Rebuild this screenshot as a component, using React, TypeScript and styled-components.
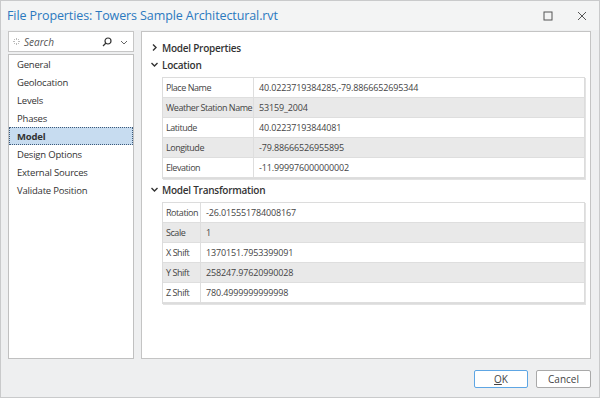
import React from "react";
import styled, { createGlobalStyle } from "styled-components";

const Global = createGlobalStyle`
  html, body { margin: 0; padding: 0; background: #eeeff0; }
  * { box-sizing: border-box; }
  body { font-family: "Open Sans", "Noto Sans", sans-serif; }
`;

const Window = styled.div`
  width: 600px;
  height: 398px;
  border: 1px solid #c9cacb;
  background: #eeeff0;
  display: flex;
  flex-direction: column;
  overflow: hidden;
`;

const TitleBar = styled.div`
  height: 29px;
  flex: none;
  display: flex;
  align-items: center;
  padding-left: 6px;
  background: #f3f4f4;
`;

const Title = styled.div`
  flex: 1;
  color: #2b79bf;
  font-size: 12.5px;
  letter-spacing: -0.1px;
`;

const WinButton = styled.div`
  width: 34px;
  height: 29px;
  display: flex;
  align-items: center;
  justify-content: center;
`;

const Body = styled.div`
  flex: 1;
  display: flex;
  gap: 7px;
  padding: 1px 8px 0 7px;
  min-height: 0;
`;

const Sidebar = styled.div`
  width: 126px;
  display: flex;
  flex-direction: column;
  gap: 2px;
  height: 328px;
`;

const SearchBox = styled.div`
  height: 21px;
  background: #fff;
  border: 1px solid #c6c6c6;
  display: flex;
  align-items: center;
  padding: 0 4px 0 4px;
  gap: 4px;
`;

const SearchText = styled.span`
  flex: 1;
  font-style: italic;
  color: #555;
  font-size: 10px;
`;

const List = styled.div`
  flex: 1;
  background: #fff;
  border: 1px solid #c0c0c0;
  display: flex;
  flex-direction: column;
`;

const Item = styled.div<{ $selected?: boolean }>`
  height: 18px;
  display: flex;
  align-items: center;
  padding-left: 7px;
  font-size: 9.5px;
  letter-spacing: -0.2px;
  color: #333;
  font-weight: ${(p) => (p.$selected ? 700 : 400)};
  background: ${(p) => (p.$selected ? "#c7dcf0" : "transparent")};
  border: 1px dotted ${(p) => (p.$selected ? "#3d5a7a" : "transparent")};
`;

const Panel = styled.div`
  flex: 1;
  background: #fff;
  border: 1px solid #c4c4c4;
  height: 328px;
  padding: 7px 5px 0 8px;
  display: flex;
  flex-direction: column;
`;

const SectionHeader = styled.div`
  height: 17px;
  flex: none;
  display: flex;
  align-items: center;
  gap: 3px;
  font-weight: 600;
  font-size: 10px;
  letter-spacing: -0.25px;
  color: #333;
`;

const Chevron = styled.svg`
  width: 9px;
  height: 9px;
  flex: none;
`;

const Table = styled.div<{ $labelWidth: number }>`
  margin: 4px 0 2px 12px;
  border: 1px solid #dcdcdc;
  box-shadow: 1px 1px 0 #e3e3e3;
  display: grid;
  grid-template-columns: ${(p) => p.$labelWidth}px 1fr;
`;

const Cell = styled.div<{ $alt: boolean; $label?: boolean }>`
  height: 20px;
  display: flex;
  align-items: center;
  padding-left: ${(p) => (p.$label ? 3 : 5)}px;
  font-size: 9px;
  letter-spacing: ${(p) => (p.$label ? -0.45 : -0.15)}px;
  color: #444;
  white-space: nowrap;
  overflow: hidden;
  background: ${(p) => (p.$alt ? "#e9e9e9" : "#fff")};
  border-bottom: 1px solid #dedede;
  border-right: ${(p) => (p.$label ? "1px solid #dedede" : "none")};
`;

const Footer = styled.div`
  flex: none;
  height: 39px;
  display: flex;
  justify-content: flex-end;
  align-items: flex-start;
  gap: 8px;
  padding: 12px 8px 0 0;
`;

const Button = styled.div<{ $primary?: boolean }>`
  width: ${(p) => (p.$primary ? 54 : 55)}px;
  height: 18px;
  border-radius: 2px;
  border: 1px solid ${(p) => (p.$primary ? "#5ea6e4" : "#a9a9a9")};
  background: #fff;
  display: flex;
  align-items: center;
  justify-content: center;
  font-size: 10px;
  color: #444;
`;

const Underline = styled.span`
  text-decoration: underline;
`;

const ChevronRight = () => (
  <Chevron viewBox="0 0 9 9">
    <path d="M3 1.5 L6 4.5 L3 7.5" fill="none" stroke="#333" strokeWidth="1.4" />
  </Chevron>
);
const ChevronDown = () => (
  <Chevron viewBox="0 0 9 9">
    <path d="M1.5 3 L4.5 6 L7.5 3" fill="none" stroke="#333" strokeWidth="1.4" />
  </Chevron>
);

type Row = [string, string];

const PropTable = ({ rows, labelWidth }: { rows: Row[]; labelWidth: number }) => (
  <Table $labelWidth={labelWidth}>
    {rows.map(([k, v], i) => (
      <React.Fragment key={k}>
        <Cell $alt={i % 2 === 1} $label>
          {k}
        </Cell>
        <Cell $alt={i % 2 === 1}>{v}</Cell>
      </React.Fragment>
    ))}
  </Table>
);

const location: Row[] = [
  ["Place Name", "40.0223719384285,-79.8866652695344"],
  ["Weather Station Name", "53159_2004"],
  ["Latitude", "40.02237193844081"],
  ["Longitude", "-79.88666526955895"],
  ["Elevation", "-11.999976000000002"],
];

const transform: Row[] = [
  ["Rotation", "-26.015551784008167"],
  ["Scale", "1"],
  ["X Shift", "1370151.7953399091"],
  ["Y Shift", "258247.97620990028"],
  ["Z Shift", "780.4999999999998"],
];

const items = [
  "General",
  "Geolocation",
  "Levels",
  "Phases",
  "Model",
  "Design Options",
  "External Sources",
  "Validate Position",
];

export default function App() {
  return (
    <>
      <Global />
      <Window>
        <TitleBar>
          <Title>File Properties: Towers Sample Architectural.rvt</Title>
          <WinButton>
            <svg width="10" height="10" viewBox="0 0 10 10">
              <rect x="1" y="1" width="8" height="8" fill="none" stroke="#555" strokeWidth="1" />
            </svg>
          </WinButton>
          <WinButton>
            <svg width="10" height="10" viewBox="0 0 10 10">
              <path d="M1 1 L9 9 M9 1 L1 9" stroke="#555" strokeWidth="1" />
            </svg>
          </WinButton>
        </TitleBar>
        <Body>
          <Sidebar>
            <SearchBox>
              <svg width="7" height="7" viewBox="0 0 7 7">
                <g fill="#bbb">
                  <rect x="3" y="0" width="1" height="2" />
                  <rect x="3" y="5" width="1" height="2" />
                  <rect x="0" y="3" width="2" height="1" />
                  <rect x="5" y="3" width="2" height="1" />
                  <rect x="1" y="1" width="1" height="1" />
                  <rect x="5" y="5" width="1" height="1" />
                  <rect x="5" y="1" width="1" height="1" />
                  <rect x="1" y="5" width="1" height="1" />
                </g>
              </svg>
              <SearchText>Search</SearchText>
              <svg width="10" height="10" viewBox="0 0 10 10">
                <circle cx="6" cy="4" r="3" fill="none" stroke="#333" strokeWidth="1.2" />
                <path d="M4 6 L1 9" stroke="#333" strokeWidth="1.3" />
              </svg>
              <svg width="10" height="10" viewBox="0 0 10 10" style={{ marginLeft: 3 }}>
                <path d="M2 4 L5 7 L8 4" fill="none" stroke="#666" strokeWidth="1" />
              </svg>
            </SearchBox>
            <List>
              {items.map((it) => (
                <Item key={it} $selected={it === "Model"}>
                  {it}
                </Item>
              ))}
            </List>
          </Sidebar>
          <Panel>
            <SectionHeader>
              <ChevronRight />
              Model Properties
            </SectionHeader>
            <SectionHeader>
              <ChevronDown />
              Location
            </SectionHeader>
            <PropTable rows={location} labelWidth={91} />
            <SectionHeader>
              <ChevronDown />
              Model Transformation
            </SectionHeader>
            <PropTable rows={transform} labelWidth={38} />
          </Panel>
        </Body>
        <Footer>
          <Button $primary>
            <Underline>O</Underline>K
          </Button>
          <Button>Cancel</Button>
        </Footer>
      </Window>
    </>
  );
}
